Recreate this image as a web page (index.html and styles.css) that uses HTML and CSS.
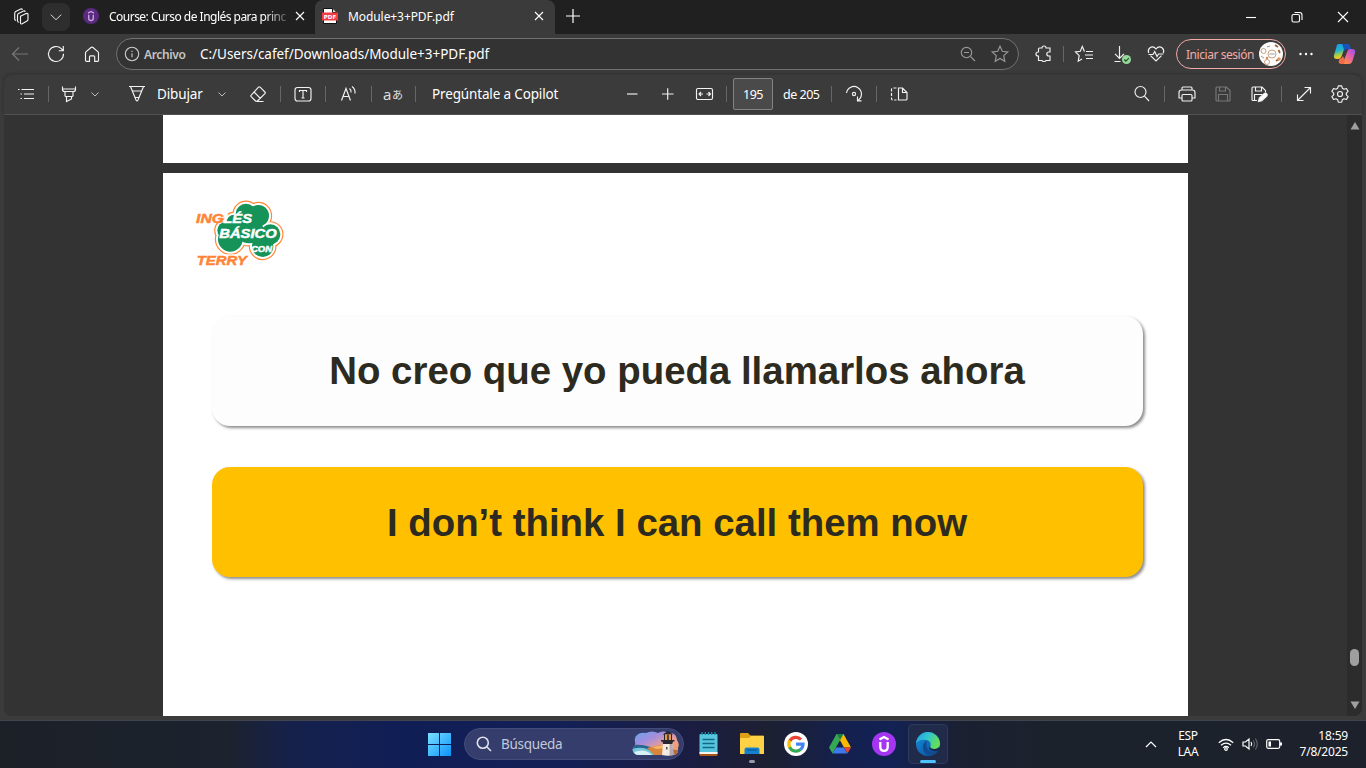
FILE: index.html
```html
<!DOCTYPE html>
<html lang="es">
<head>
<meta charset="utf-8">
<title>Module+3+PDF.pdf</title>
<link rel="stylesheet" href="styles.css">
</head>
<body>
<div class="screen">
  <header class="tabs">
    <svg class="i workspaces" viewBox="0 0 20 20"><path d="M8.500 9.200l5.500-2.600q2-.8 2 1v4.900q0 1-1 1.500l-4.800 2.700q-1.700.8-1.700-1zM5.500 14.500V8.500q0-1.500 1-2l5-2.500q1.300-.5 1.800.700M2.700 12.700V6.500q0-1.500 1-2l5-2.500q1.300-.5 1.800.7"/><path d="M2.700 12.700l1.300.8M5.500 14.500l1.300.9"/></svg>
    <div class="tab-menu"><svg class="i" viewBox="0 0 20 20"><path d="M3.500 7l6.500 6.500L16.500 7"/></svg></div>
    <div class="tab">
      <svg class="fav" viewBox="0 0 16 16"><circle cx="8" cy="8" r="8" fill="#5b2a80"/><path d="M5 5.200L8 3.500l3 1.700M5.700 6.800v3.500q0 2.200 2.300 2.200t2.300-2.200V6.800" fill="none" stroke="#c3a5d8" stroke-width="1.400"/></svg>
      <span class="tab-title fade">Course: Curso de Inglés para princ</span>
      <svg class="x" viewBox="0 0 10 10"><path d="M1 1l8 8M9 1L1 9"/></svg>
    </div>
    <div class="tab active">
      <svg class="pdf" viewBox="0 0 16 16"><path d="M1.500.5h9l4 4v11h-13z" fill="#fff" stroke="#111"/><path d="M10.500.5v4h4" fill="#ddd" stroke="#111"/><rect y="4.500" width="16" height="8" fill="#f33c42"/><text x="1.800" y="10.800" textLength="12.400">PDF</text></svg>
      <span class="tab-title">Module+3+PDF.pdf</span>
      <svg class="x" viewBox="0 0 10 10"><path d="M1 1l8 8M9 1L1 9"/></svg>
    </div>
    <svg class="newtab" viewBox="0 0 14 14"><path d="M7 0v14M0 7h14"/></svg>
    <div class="window-buttons">
      <svg class="wb" viewBox="0 0 12 12"><path d="M1 6.500h10"/></svg>
      <svg class="wb" viewBox="0 0 12 12"><rect x="1" y="3.500" width="7.500" height="7.500" rx="1.500"/><path d="M3.500 1.500h5q2.500 0 2.500 2.500v5"/></svg>
      <svg class="wb" viewBox="0 0 12 12"><path d="M1 1l10 10M11 1L1 11"/></svg>
    </div>
  </header>

  <nav class="address-row">
    <svg class="i dim" viewBox="0 0 20 20"><path d="M18 10H2.500M9 3.500L2.500 10 9 16.500"/></svg>
    <svg class="i m16" viewBox="0 0 20 20"><path d="M17.500 9.800A7.500 7.500 0 1 1 15.300 4.700L17 6.500M17.300 2v4.700h-4.500"/></svg>
    <svg class="i m16" viewBox="0 0 20 20"><path d="M3.500 9q0-.8.700-1.400L9 3.500q1-.8 2 0l4.800 4.100q.7.600.7 1.400v7.500q0 .8-.8.800h-3v-4.500q0-1-1-1H8.500q-1 0-1 1v4.500h-3q-1 0-1-.8z"/></svg>
    <div class="address">
      <svg class="info" viewBox="0 0 16 16"><circle cx="8" cy="8" r="6.700"/><path d="M8 7.300v4M8 4.700v1.400"/></svg>
      <span class="scheme">Archivo</span>
      <span class="url">C:/Users/cafef/Downloads/Module+3+PDF.pdf</span>
      <svg class="i mid" viewBox="0 0 20 20"><circle cx="8.500" cy="8.500" r="5.200"/><path d="M12.500 12.500l4.500 4.500M6 8.500h5"/></svg>
      <svg class="i mid m12" viewBox="0 0 20 20"><path d="M10 2.200l2.300 5.100 5.500.6-4.100 3.800 1.100 5.600L10 14.500l-4.800 2.800 1.100-5.600-4.100-3.800 5.500-.6z"/></svg>
    </div>
    <svg class="i m14" viewBox="-1 0 20 20"><path d="M5.500 4H8q0-2 2-2t2 2h4v4h-1.200q-2 0-2 2t2 2H16v4.500h-4q0 1-2 1t-2-1H4.500V12H4q-2 0-2-2t2-2h.500V5q0-1 1-1z"/></svg>
    <i class="sep m10"></i>
    <svg class="i m10" viewBox="0 0 20 20"><path d="M10.500 7.500L8.300 2.500 6.300 7.200l-4.800.7 3.700 3.700-1 5.600L8 15M8.300 2.500l2 4.700M12 7.500h7M11 11h8M12 14.500h7"/></svg>
    <svg class="i m18" viewBox="0 0 20 20"><path d="M7.500 2v12.500M3 9.800l4.500 4.700 4.500-4.500M2.500 17.500h6"/><circle cx="14.500" cy="15.500" r="4.500" fill="#96d998" stroke="none"/><path d="M12.300 15.500l1.600 1.700 3-3" stroke="#28482a"/></svg>
    <svg class="i m14" viewBox="0 0 20 20"><path d="M2.700 9Q1.500 6 3.700 4q3.500-2.500 6.300 1 2.800-3.500 6.300-1 2.200 2 1 5M4.500 11.700L10 17l5.500-5.300M2.500 10.500H7l1.700-3L11 12.500l1.500-2.500h5"/></svg>
    <div class="signin"><span>Iniciar sesión</span>
      <svg class="avatar" viewBox="0 0 24 24"><circle cx="12" cy="12" r="12" fill="#fffdfb"/><g fill="none" stroke="#c9a186" stroke-width="1"><circle cx="13" cy="12" r="4"/><circle cx="4.500" cy="9" r="2.500"/><circle cx="8" cy="20" r="2.500"/><path d="M16 3l3 2M19.500 8l1.500 3M17 19l3-2" stroke="#9d6038" stroke-width="1.700"/><path d="M10.500 12h5M8 5l3-1M2 14l3 2" stroke="#999"/></g><circle cx="20" cy="17" r="1.800" fill="#dd9a65"/><circle cx="8" cy="16" r="1.300" fill="#d58c62"/></svg>
    </div>
    <svg class="i dots" viewBox="0 0 20 20"><circle cx="4.500" cy="10" r="1.200"/><circle cx="10" cy="10" r="1.200"/><circle cx="15.500" cy="10" r="1.200"/></svg>
    <svg class="copilot" viewBox="0 0 24 22"><defs><linearGradient id="ca" x2=".2" y2="1"><stop stop-color="#159bf0"/><stop offset=".5" stop-color="#25b5c8"/><stop offset=".8" stop-color="#b5cf3d"/><stop offset="1" stop-color="#f2c52b"/></linearGradient><linearGradient id="cb" x1="1" x2=".3" y2="1"><stop stop-color="#8f53ec"/><stop offset=".45" stop-color="#dd5ab9"/><stop offset="1" stop-color="#ff8b48"/></linearGradient></defs><path d="M7 1h6l-.5 4-3 8.500Q8.500 16 6 16H5q-4 0-3-4l2.500-8Q4.500 1 7 1z" fill="url(#ca)"/><path d="M10 1h5.500q2 0 2.500 2l1 3h-4q-1.500 0-2.500 2z" fill="#1656bb"/><path d="M17.500 6H20q4 0 3 4l-2.500 8q-1 3-3.500 3h-6l1-4 3.500-9q.5-2 2-2z" fill="url(#cb)"/><path d="M7.500 16q2.500-.5 3.500-3l2 5q-.5 3-2.500 3H9q-2 0-2.500-2z" fill="#f46b49"/></svg>
  </nav>

  <section class="pdf-toolbar">
    <svg class="i m12" viewBox="0 0 20 20"><path d="M5.500 5.500H18M8 10h10M8 14.500h10M2 5.500h1.500M4.500 10H6M4.500 14.500H6"/></svg>
    <i class="sep m12"></i>
    <svg class="i m10" viewBox="0 0 20 20"><path d="M3.500 2.500v3q0 2 2 2h9q2 0 2-2v-3M3.500 5h13M6 7.500v4q0 1 1 1h6q1 0 1-1v-4M7.500 12.500v5l5-2.500v-2.500"/></svg>
    <svg class="chev m10" viewBox="0 0 12 12"><path d="M2.500 4.500L6 8l3.500-3.500"/></svg>
    <svg class="i m26" viewBox="0 0 20 20"><path d="M2 2.500h16M3.500 2.500L9 16q1 2 2 0l5.500-13.500M5.500 7h9M8 13.500h4"/></svg>
    <span class="t-draw m10">Dibujar</span>
    <svg class="chev m13" viewBox="0 0 12 12"><path d="M2.500 4.500L6 8l3.500-3.500"/></svg>
    <svg class="i m20" viewBox="0 0 20 20"><path d="M10.500 3.200q.8-.8 1.600 0l4.800 4.800q.8.800 0 1.600L10 16.500q-1.500 1.500-3 0l-3.800-3.800q-.8-.8 0-1.600zM6 8l6.500 6.500M8.500 17.500h7"/></svg>
    <i class="sep m12"></i>
    <svg class="i m12" viewBox="0 0 20 20"><rect x="2" y="3.500" width="16" height="13.500" rx="2.500"/><path d="M6.500 8V6.500h7V8M10 6.500V14M8.500 14h3"/></svg>
    <i class="sep m12"></i>
    <svg class="i m12" viewBox="0 0 20 20"><path d="M3.500 16.500L8 4.500l4.500 12M5 12.500h6M11.500 4.500q2 1.500 1.500 4M14 2.500q3.500 2.500 3 7"/></svg>
    <i class="sep m13"></i>
    <span class="translate m10"><span>a</span><span class="jp">あ</span></span>
    <i class="sep m13"></i>
    <span class="t-ask m16">Pregúntale a Copilot</span>
    <svg class="i m62" viewBox="0 0 20 20"><path d="M5 10h10.500"/></svg>
    <svg class="i m16" viewBox="0 0 20 20"><path d="M4 10h11.500M9.700 4.200v11.500"/></svg>
    <svg class="i m17" viewBox="0 0 20 20"><rect x="1.500" y="4.500" width="16" height="11" rx="1.500"/><path d="M4 10h4M6 8l-2 2 2 2M15.500 10h-4M13.500 8l2 2-2 2"/></svg>
    <i class="sep m11"></i>
    <span class="page-no m6">195</span>
    <span class="t-of m10">de 205</span>
    <i class="sep m10"></i>
    <svg class="i m12" viewBox="0 0 20 20"><path d="M2.500 9A7.500 7.500 0 1 1 14 16.300M13.500 12.500v4.300h4"/><circle cx="10" cy="10" r="1.600"/></svg>
    <i class="sep m12"></i>
    <svg class="i m12" viewBox="0 0 20 20"><path d="M9.500 4v12h7.500q1 0 1-1V8.500L13.500 4zM13.500 4v4.500H18"/><path d="M7.500 4H4Q2.500 4 2.500 5.500v9q0 1.500 1.500 1.500h3.500" stroke-dasharray="3 1.500"/></svg>
    <svg class="i m223" viewBox="0 0 20 20"><circle cx="8.500" cy="8" r="5.500"/><path d="M12.500 12.200L17 17"/></svg>
    <i class="sep m12"></i>
    <svg class="i m12" viewBox="0 0 20 20"><path d="M5 6V4q0-1 1-1h8q1 0 1 1v2M5 14H2V8.500Q2 6 4.500 6h11Q18 6 18 8.500V14h-3"/><rect x="5" y="10.500" width="10" height="6.500" rx="1"/></svg>
    <svg class="i faint m16" viewBox="0 0 20 20"><path d="M4 3h9.500L17 6.500V16q0 1-1 1H4q-1 0-1-1V4q0-1 1-1zM6.500 3v4h6V3M5.500 17v-6.500h9V17"/></svg>
    <svg class="i m16" viewBox="0 0 20 20"><path d="M8 16.500H4q-1 0-1-1V4q0-1 1-1h9l3.500 3.500v2M6.500 3v4h6V3M5.500 16.500v-6h8"/><path d="M9.500 17.500l.8-3.500 5-4.500q1.500-1 2.500.3t0 2.200l-5 4.700z" fill="#fff"/></svg>
    <i class="sep m12"></i>
    <svg class="i m12" viewBox="0 0 20 20"><path d="M3.500 16.500l13-13M10.500 3.500h6v6M3.500 10.500v6h6"/></svg>
    <svg class="i m16" viewBox="0 0 20 20"><path d="M8.300 1.800h3.400l.6 2.400 1.700 1 2.400-.7 1.700 2.900-1.800 1.800v1.600l1.800 1.800-1.700 2.900-2.400-.7-1.700 1-.6 2.400H8.300l-.6-2.400-1.700-1-2.400.7-1.700-2.900 1.800-1.800V9.200L1.900 7.400l1.700-2.900 2.400.7 1.700-1z" stroke-linejoin="round"/><circle cx="10" cy="10" r="2.500"/></svg>
  </section>

  <main class="viewer">
    <div class="pages">
      <div class="page previous"></div>
      <article class="page current">
        <svg class="logo" viewBox="0 0 360 270"><defs><g id="clover"><circle cx="198" cy="72" r="31"/><circle cx="235" cy="77" r="32"/><circle cx="271" cy="133" r="30"/><circle cx="248" cy="169" r="32"/><circle cx="151" cy="148" r="37"/><circle cx="138" cy="121" r="26"/><circle cx="207" cy="118" r="42"/><circle cx="163" cy="98" r="24"/></g></defs><use href="#clover" stroke="#ff8435" stroke-width="19" fill="none"/><use href="#clover" stroke="#fff" stroke-width="12" fill="#fff"/><use href="#clover" fill="#159358"/><g class="logo-text"><text class="orange" x="48" y="99" font-size="41" textLength="84" lengthAdjust="spacingAndGlyphs">ING</text><text x="130" y="99" font-size="41" textLength="86" lengthAdjust="spacingAndGlyphs">LÉS</text><text x="118" y="143" font-size="41" textLength="172" lengthAdjust="spacingAndGlyphs">BÁSICO</text><text x="213" y="185" font-size="27" textLength="63" lengthAdjust="spacingAndGlyphs">CON</text><text class="orange edge" x="50" y="226" font-size="41" textLength="151" lengthAdjust="spacingAndGlyphs">TERRY</text><text class="orange" x="50" y="226" font-size="41" textLength="151" lengthAdjust="spacingAndGlyphs" aria-hidden="true">TERRY</text></g></svg>
        <div class="card white"><span class="es">No creo que yo pueda llamarlos ahora</span></div>
        <div class="card yellow"><span class="en">I don’t think I can call them now</span></div>
      </article>
    </div>
    <aside class="scrollbar">
      <svg class="arrow" viewBox="0 0 10 8"><path d="M5 0l4.500 7.500h-9z"/></svg>
      <i class="thumb"></i>
      <svg class="arrow" viewBox="0 0 10 8"><path d="M5 8L.5.500h9z"/></svg>
    </aside>
  </main>

  <footer class="taskbar">
    <svg class="start" viewBox="0 0 23 23"><defs><linearGradient id="wg" x2="1" y2="1"><stop stop-color="#7ce0ff"/><stop offset="1" stop-color="#0a94fa"/></linearGradient></defs><path fill="url(#wg)" d="M0 0h11v11H0zM12 0h11v11H12zM0 12h11v11H0zM12 12h11v11H12z"/></svg>
    <div class="search">
      <svg viewBox="0 0 16 16"><circle cx="6.800" cy="6.800" r="5.500"/><path d="M11 11l4 4"/></svg>
      <span>Búsqueda</span>
      <svg class="lighthouse" viewBox="0 0 48 28"><defs><linearGradient id="sky" x2=".9" y2="1"><stop stop-color="#5aa9ed"/><stop offset=".35" stop-color="#a28ede"/><stop offset=".65" stop-color="#f3a08d"/><stop offset="1" stop-color="#e89b4f"/></linearGradient><clipPath id="blob"><path d="M5 5q3-3 9-2 6-3 12 0 5-3 11 0 7-1 8 7 3 4 1 8 1 7-6 7H8q-9 0-7-7 3-3 2-6-1-5 2-7z"/></clipPath></defs><g clip-path="url(#blob)"><rect width="48" height="28" fill="url(#sky)"/><path d="M0 15q12-1 20 3 5 3 8 10H0z" fill="#28658f"/><path d="M0 19q10-3 17 1t9 8H4z" fill="#77c6da"/><path d="M2 22q9-3 14 0t6 6H6z" fill="#d8f2f3"/><path d="M15 18l13-3 19 6v7H25z" fill="#d8863b"/><path d="M20 17l12-2 4 3-12 1z" fill="#f4b565"/><path d="M38 20h8v8h-8z" fill="#b26a47"/></g><path d="M31 14h9.500l1 11q-5.500 1.500-11.500 0z" fill="#f4ece3"/><path d="M37.500 14h3l1 11h-4z" fill="#b9a9ae"/><path d="M29 10h13.500v1.500H29zM30 10h11.500l-1.300 4h-9zM30.500 4.500h10.500L36 1zM32 4.500h1V10h-1zM39 4.500h1V10h-1z" fill="#28272f"/><path d="M33 4.500h6V10h-6z" fill="#e39a4b"/><path d="M35 4.500h2V10h-2z" fill="#5d3f37"/><path d="M34 17h1.500v2.500H34z" fill="#554855"/></svg>
    </div>
    <svg class="notepad" viewBox="0 0 19 25"><rect x=".5" y="2" width="18" height="20" rx="1" fill="#57c5dd"/><path d="M.5 20h18v3q0 1-1 1h-16q-1 0-1-1z" fill="#a75619"/><path d="M.5 20h18v2H.5z" fill="#f6f4ee"/><path d="M3.500 7.500h12M3.500 11.500h12M3.500 15.500h12" stroke="#126985" stroke-width="1.700"/><path d="M3 0v3M6.300 0v3M9.500 0v3M12.700 0v3M16 0v3" stroke="#168caa" stroke-width="1.300"/></svg>
    <div class="folder"><svg viewBox="0 0 24 23"><path d="M0 2q0-1 1-1h7l2.500 2.500H23q1 0 1 1V22H0z" fill="#dda014"/><path d="M0 6h9l2-2h12q1 0 1 1v16q0 1-1 1H1q-1 0-1-1z" fill="#ffd246"/><path d="M4.500 22v-4.500q0-2 2-2h11q2 0 2 2V22z" fill="#1682ce"/><path d="M7 18h10" stroke="#0764a3" stroke-width="1.500"/></svg><i></i></div>
    <svg class="google" viewBox="0 0 24 24"><circle cx="12" cy="12" r="12" fill="#fff"/><g fill="none" stroke-width="3.200"><path d="M17 7.500A7 7 0 0 0 5.800 8.900" stroke="#ea4335"/><path d="M5.800 8.500a7 7 0 0 0 0 7" stroke="#fbbc05"/><path d="M5.600 15.100A7 7 0 0 0 16.500 17.500" stroke="#34a853"/><path d="M16.300 17.500A7 7 0 0 0 19 12.200h-7" stroke="#4285f4"/></g></svg>
    <svg class="drive" viewBox="0 0 22 20"><path d="M7.500 0h7L11 6.200 3.500 19.500 0 13.500z" fill="#35a853"/><path d="M7.500 0h7L22 13.500h-7z" fill="#fbb905"/><path d="M7 13.500h8l3 6H3.500z" fill="#3e79ee"/><path d="M15 13.500h7l-3.500 6z" fill="#e74235"/><path d="M7.500 0h7L11 6.200z" fill="#158345"/></svg>
    <svg class="udemy" viewBox="0 0 24 24"><circle cx="12" cy="12" r="12" fill="#a435f0"/><path d="M7.500 7.500L12 5l4.500 2.500M8.300 10v5q0 3.800 3.700 3.800t3.700-3.800v-5" fill="none" stroke="#fff" stroke-width="2.300"/></svg>
    <div class="edge-tile"><svg viewBox="0 0 24 24"><defs><linearGradient id="ea" x2="1" y2=".4"><stop stop-color="#239ce0"/><stop offset=".5" stop-color="#30c5d2"/><stop offset="1" stop-color="#64df57"/></linearGradient><linearGradient id="eb" x2="1" y2="1"><stop stop-color="#168edb"/><stop offset="1" stop-color="#0a4b9c"/></linearGradient></defs><circle cx="12" cy="12" r="12" fill="url(#eb)"/><path d="M.1 11A12 12 0 0 1 24 11q.5 6-6 6-5 0-3.800-2.500Q16 10 11 8 4 6.500.1 11z" fill="url(#ea)"/><path d="M11 8.500q-5 3-4 8.500 1.500 5.500 7 6.700 5-.5 8.200-5.200-4 2-8 .5-5.500-2-3.200-10.500z" fill="#114b91"/><path d="M14.300 14.300q-.5 3.200 5 2.700 2-.2 3.500-1.500l1.200 1-1.500 2q-5 1.500-8-.5-2.500-2-.2-3.700z" fill="#182852"/></svg><i></i></div>
    <div class="tray">
      <svg class="up" viewBox="0 0 12 8"><path d="M1 7l5-5 5 5"/></svg>
      <div class="lang">ESP<br>LAA</div>
      <svg class="wifi" viewBox="0 0 16 13"><path d="M.8 4.800q7.200-6.600 14.400 0M3 7.300q5-4.500 10 0M5.200 9.700q2.800-2.500 5.600 0"/><circle cx="8" cy="11" r="1.300"/></svg>
      <svg class="speaker" viewBox="0 0 16 14"><path d="M1 5v4h2.500l3.500 3V2L3.500 5zM9 5q1.500 2 0 4"/><path d="M11.300 3.500q2.500 3.500 0 7M13.300 1.500q4 5.500 0 11" stroke="#62656b"/></svg>
      <svg class="battery" viewBox="0 0 17 10"><rect x=".7" y=".7" width="13" height="8.600" rx="1.500"/><path d="M15 3.500v3" stroke-width="2"/><path d="M2.500 2.500H5v5H2.500z" fill="#fff" stroke="none"/></svg>
      <div class="clock"><span class="time">18:59</span><span class="date">7/8/2025</span></div>
    </div>
  </footer>
</div>
</body>
</html>
```
FILE: styles.css
```css
* { box-sizing: border-box; }
body { margin: 0; overflow: hidden; font-family: "Noto Sans", "Open Sans", sans-serif; font-size: 13px; color: #fff; }
svg { display: block; flex: none; }
span { white-space: nowrap; flex: none; }
.screen { width: 1366px; height: 768px; background: #3b3b3b; display: flex; flex-direction: column; }
.i { width: 20px; height: 20px; fill: none; stroke: #f2f2f2; stroke-width: 1.15; }
.dim { stroke: #777; }
.mid { stroke: #999; }
.faint { stroke: #777; }
.sep { width: 1px; height: 16px; background: #666; flex: none; }
.m6 { margin-left: 6px; } .m10 { margin-left: 10px; } .m11 { margin-left: 11px; }
.m12 { margin-left: 12px; } .m13 { margin-left: 13px; } .m14 { margin-left: 14px; }
.m16 { margin-left: 16px; } .m17 { margin-left: 17px; } .m18 { margin-left: 18px; }
.m20 { margin-left: 20px; } .m26 { margin-left: 26px; } .m62 { margin-left: 62px; }
.m223 { margin-left: 223px; }

.tabs { height: 34px; background: #202020; display: flex; align-items: center; padding-left: 12px; }
.workspaces { margin-right: 10px; }
.tab-menu { width: 28px; height: 28px; border-radius: 8px; background: #2e2e2e; display: flex; align-items: center; justify-content: center; }
.tab-menu .i { width: 16px; height: 16px; }
.tab { width: 245px; height: 34px; display: flex; align-items: center; padding: 0 10px 2px 13px; }
.fav { width: 16px; height: 16px; }
.tab-title { font-size: 12px; margin-left: 10px; width: 182px; overflow: hidden; letter-spacing: -.08px; }
.fade { letter-spacing: -.52px; -webkit-mask-image: linear-gradient(90deg, #000 155px, transparent 184px); mask-image: linear-gradient(90deg, #000 155px, transparent 184px); }
.x { width: 10px; height: 10px; margin-left: auto; stroke: #fff; stroke-width: 1.1; }
.tab.active { width: 240px; background: #3b3b3b; border-radius: 8px 8px 0 0; padding: 0 11px 2px 7px; }
.pdf { width: 16px; height: 16px; }
.pdf text { font: bold 5.500px "DejaVu Sans", sans-serif; fill: #fff; }
.newtab { width: 14px; height: 14px; margin: 0 0 3px 11px; stroke: #fff; stroke-width: 1.2; }
.window-buttons { display: flex; gap: 34px; margin: 0 17px 0 auto; }
.wb { width: 12px; height: 12px; fill: none; stroke: #fff; stroke-width: 1.1; }

.address-row { height: 40px; display: flex; align-items: center; padding-left: 10px; }
.address { width: 903px; height: 32px; margin-left: 14px; border: 1px solid #717171; border-radius: 16px; background: #333; display: flex; align-items: center; padding: 0 8px 0 7px; }
.info { width: 16px; height: 16px; fill: none; stroke: #ccc; stroke-width: 1.1; }
.scheme { margin-left: 4px; width: 42px; font-size: 12px; font-weight: 600; color: #c5c5c5; letter-spacing: -.35px; }
.url { margin: 0 auto 0 14px; font-size: 13.5px; letter-spacing: -.03px; }
.signin { width: 110px; height: 30px; margin-left: 10px; border: 1px solid #f1aaa5; border-radius: 15px; color: #f4aaa5; font-size: 12px; letter-spacing: -.45px; display: flex; align-items: center; justify-content: space-between; padding: 0 2px 0 9px; }
.avatar { width: 24px; height: 24px; }
.dots { margin-left: 10px; fill: #fff; stroke: none; }
.copilot { width: 24px; height: 22px; margin-left: 16px; }

.pdf-toolbar { height: 41px; margin: 0 4px; border: 1px solid #363636; border-bottom-color: #505050; border-left: 0; border-right: 0; border-radius: 8px 8px 0 0; background: #3b3b3b; display: flex; align-items: center; padding-bottom: 1px; box-shadow: 0 0 3px #2b2b2b; clip-path: inset(-3px -3px 0 -3px); }
.chev { width: 12px; height: 12px; fill: none; stroke: #bbb; }
.pdf-toolbar span { font-size: 13.500px; letter-spacing: -.15px; }
.t-draw { width: 46px; }
.t-ask { width: 128px; }
.t-of { width: 38px; }
.pdf-toolbar .t-of, .pdf-toolbar .page-no { font-size: 12.500px; letter-spacing: -.5px; }
.translate { width: 20px; display: flex; align-items: center; }
.pdf-toolbar .translate span { font: 15px/20px "Open Sans", sans-serif; width: 9px; margin-left: 1px; color: #e2e2e2; }
.pdf-toolbar .translate .jp { font: 11px/20px "Noto Sans CJK JP", sans-serif; margin: 0; width: 11px; }
.page-no { width: 40px; height: 32px; border: 1px solid #838383; border-radius: 2px; background: #4a4a4a; display: flex; align-items: center; justify-content: center; }

.viewer { height: 601px; margin: 0 4px; background: #333; border-radius: 0 0 8px 8px; display: flex; overflow: hidden; }
.pages { width: 1343px; padding-left: 159px; }
.page { width: 1025px; background: #fff; }
.previous { height: 48px; margin-bottom: 10px; }
.current { height: 543px; display: flex; flex-direction: column; padding: 17px 0 0 17px; }
.logo { width: 120px; height: 90px; }
.logo-text { font-family: "Liberation Sans", Arial, sans-serif; font-style: italic; font-weight: 900; fill: #fff; stroke: #fff; stroke-width: 1.5px; }
.orange { fill: #ff8435; stroke: #ff8435; }
.orange.edge { stroke: #fff; stroke-width: 9px; }
.card { width: 931px; height: 110px; margin: 35.5px 0 0 31.5px; border-radius: 18px; box-shadow: 2px 2px 3px rgba(0,0,0,.45); color: #2d2b20; font: bold 38.400px "Liberation Sans", Arial, sans-serif; display: flex; align-items: center; justify-content: center; }
.white { background: #fdfdfd; }
.yellow { background: #ffc000; margin-top: 41px; padding-top: 3px; }
.scrollbar { width: 15px; background: #2c2c2c; display: flex; flex-direction: column; align-items: center; padding: 7px 0; }
.arrow { width: 10px; height: 8px; fill: #9f9f9f; }
.thumb { width: 9px; height: 17px; margin: auto 0 35px; border-radius: 5px; background: #9f9f9f; }

.taskbar { height: 48px; margin-top: 4px; border-top: 1px solid #42454f; background: linear-gradient(90deg, #1c2128 0, #1c222e 230px, #15214b 290px, #101e56 400px, #132056 560px, #1b1d40 700px, #1d2032 770px, #132050 850px, #122254 890px, #1b2032 960px, #1c222b 1060px, #1c212b 1366px); display: flex; align-items: center; padding: 0 0 1px 428px; }
.start { width: 23px; height: 23px; margin-top: 1px; }
.search { width: 220px; height: 32px; margin-left: 13px; border-radius: 16px; border: 1px solid #444c79; background: #343d6c; display: flex; align-items: center; padding: 0 3px 0 11px; color: #c5c8d7; font-size: 13.500px; letter-spacing: -.3px; }
.search > svg:first-child { width: 16px; height: 16px; fill: none; stroke: #dfe1ec; stroke-width: 1.600; margin-right: 9px; }
.search .lighthouse { width: 48px; height: 28px; margin-left: auto; }
.notepad { width: 19px; height: 25px; margin-left: 15px; }
.folder { height: 38px; margin-left: 22px; padding-top: 7px; display: flex; flex-direction: column; align-items: center; justify-content: space-between; }
.folder svg { width: 24px; height: 23px; }
.folder i { width: 6px; height: 3px; border-radius: 2px; background: #9a9ba5; }
.google { width: 24px; height: 24px; margin-left: 20px; }
.drive { width: 22px; height: 20px; margin-left: 21px; }
.udemy { width: 24px; height: 24px; margin-left: 21px; }
.edge-tile { width: 40px; height: 40px; margin-left: 12px; border: 1px solid #2d395b; border-radius: 4px; background: #202b4a; display: flex; flex-direction: column; align-items: center; justify-content: space-between; padding-top: 7px; }
.edge-tile svg { width: 24px; height: 24px; }
.edge-tile i { width: 16px; height: 3px; border-radius: 2px; background: #4cc2ff; }
.tray { margin-left: auto; padding-right: 18px; display: flex; align-items: center; font-size: 12px; line-height: 16px; letter-spacing: -.2px; }
.tray svg { fill: none; stroke: #fff; stroke-width: 1.200; }
.up { width: 12px; height: 8px; }
.lang { width: 24px; margin-left: 19px; text-align: center; letter-spacing: -.3px; }
.wifi { width: 16px; height: 13px; margin-left: 18px; }
.speaker { width: 16px; height: 14px; margin-left: 8px; }
.battery { width: 17px; height: 10px; margin-left: 8px; }
.clock { width: 50px; margin-left: 15px; display: flex; flex-direction: column; align-items: flex-end; }
```
